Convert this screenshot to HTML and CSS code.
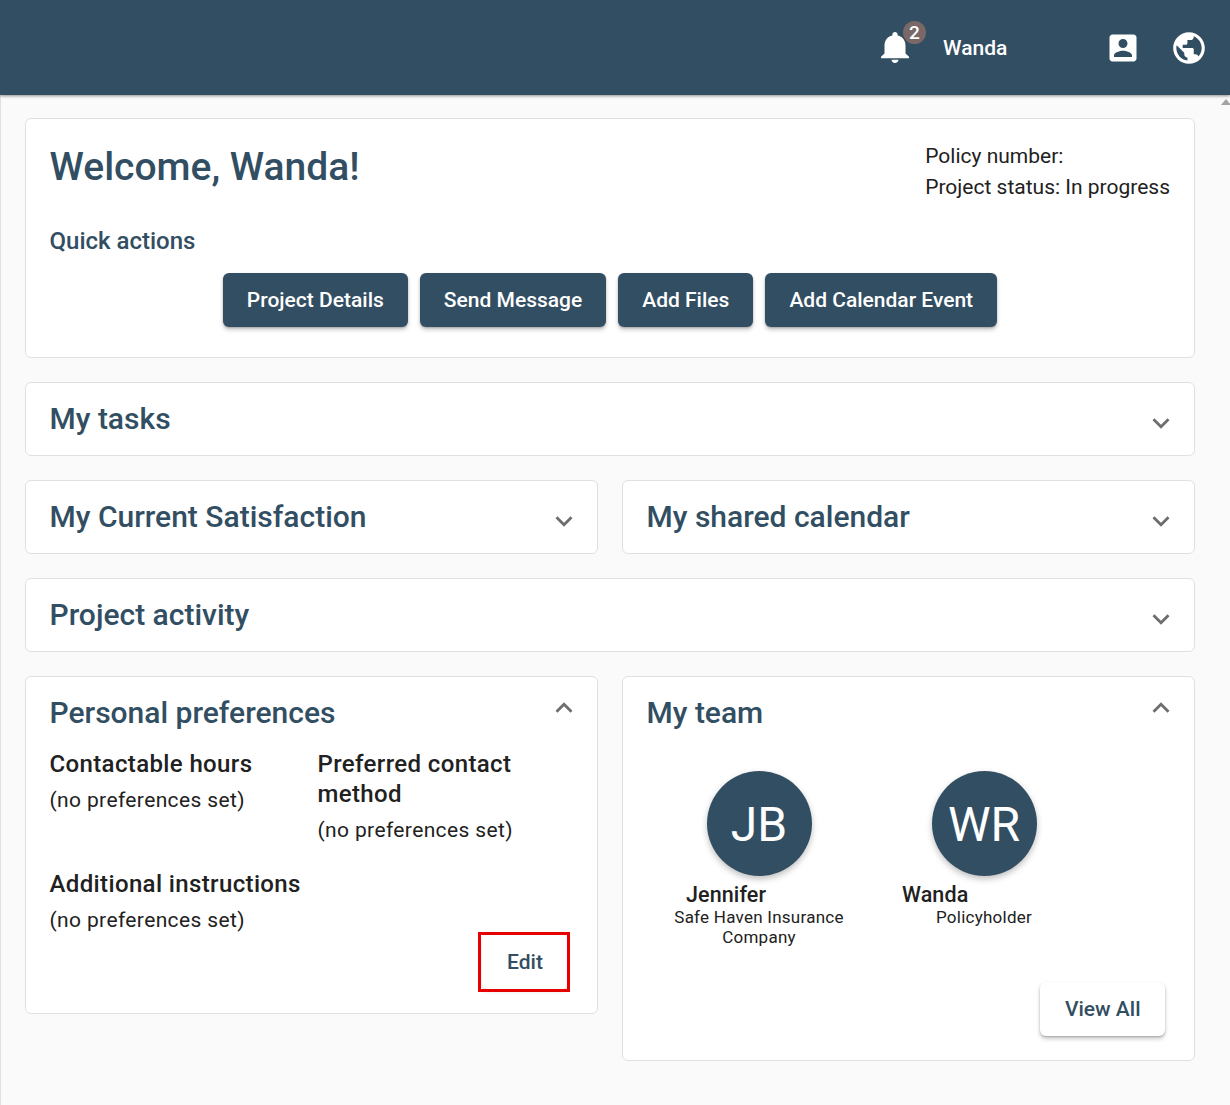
FILE: index.html
```html
<!DOCTYPE html>
<html lang="en">
<head>
<meta charset="utf-8">
<title>Dashboard</title>
<link rel="stylesheet" href="styles.css">
</head>
<body>
<header class="topbar">
  <div class="bell-wrap">
    <svg class="bell" viewBox="4 2.5 16 19.5" width="28" height="31" preserveAspectRatio="none"><path fill="#fff" d="M12 22c1.1 0 2-.9 2-2h-4c0 1.1.89 2 2 2zm6-6v-5c0-3.07-1.64-5.64-4.5-6.32V4c0-.83-.67-1.5-1.5-1.5s-1.5.67-1.5 1.5v.68C7.63 5.36 6 7.92 6 11v5l-2 2v1h16v-1l-2-2z"/></svg>
    <span class="badge">2</span>
  </div>
  <span class="user">Wanda</span>
  <svg class="contact" viewBox="0 0 24 24" width="36" height="36"><path fill="#fff" d="M3 5v14c0 1.1.89 2 2 2h14c1.1 0 2-.9 2-2V5c0-1.1-.9-2-2-2H5c-1.11 0-2 .9-2 2zm12 4c0 1.66-1.34 3-3 3s-3-1.34-3-3 1.34-3 3-3 3 1.34 3 3zm-9 8c0-2 4-3.1 6-3.1s6 1.1 6 3.1v1H6v-1z"/></svg>
  <svg class="globe" viewBox="0 0 24 24" width="38" height="38"><path fill="#fff" d="M12 2C6.48 2 2 6.48 2 12s4.48 10 10 10 10-4.48 10-10S17.52 2 12 2zm-1 17.93c-3.95-.49-7-3.85-7-7.93 0-.62.08-1.21.21-1.79L9 15v1c0 1.1.9 2 2 2v1.93zm6.9-2.54c-.26-.81-1-1.39-1.9-1.39h-1v-3c0-.55-.45-1-1-1H8v-2h2c.55 0 1-.45 1-1V7h2c1.1 0 2-.9 2-2v-.41c2.93 1.19 5 4.06 5 7.41 0 2.08-.8 3.97-2.1 5.39z"/></svg>
</header>
<span class="scroll-arrow"></span>
<main class="content">
  <section class="card welcome">
    <div class="welcome-top">
      <h1>Welcome, Wanda!</h1>
      <div class="policy">
        <div>Policy number:</div>
        <div>Project status: In progress</div>
      </div>
    </div>
    <div class="quick">Quick actions</div>
    <div class="actions">
      <button class="btn primary">Project Details</button>
      <button class="btn primary">Send Message</button>
      <button class="btn primary">Add Files</button>
      <button class="btn primary">Add Calendar Event</button>
    </div>
  </section>

  <section class="card fold">
    <h2>My tasks</h2>
    <svg class="chev" viewBox="0 0 24 24" width="34" height="34"><path d="M7.41 8.59 12 13.17l4.59-4.58L18 10l-6 6-6-6z"/></svg>
  </section>

  <div class="two">
    <section class="card fold">
      <h2>My Current Satisfaction</h2>
      <svg class="chev" viewBox="0 0 24 24" width="34" height="34"><path d="M7.41 8.59 12 13.17l4.59-4.58L18 10l-6 6-6-6z"/></svg>
    </section>
    <section class="card fold">
      <h2>My shared calendar</h2>
      <svg class="chev" viewBox="0 0 24 24" width="34" height="34"><path d="M7.41 8.59 12 13.17l4.59-4.58L18 10l-6 6-6-6z"/></svg>
    </section>
  </div>

  <section class="card fold">
    <h2>Project activity</h2>
    <svg class="chev" viewBox="0 0 24 24" width="34" height="34"><path d="M7.41 8.59 12 13.17l4.59-4.58L18 10l-6 6-6-6z"/></svg>
  </section>

  <div class="two top">
    <section class="card open prefs">
      <div class="open-head">
        <h2>Personal preferences</h2>
        <svg class="chev up" viewBox="0 0 24 24" width="34" height="34"><path d="M7.41 15.41 12 10.83l4.59 4.58L18 14l-6-6-6 6z"/></svg>
      </div>
      <div class="pref-grid">
        <div>
          <h3>Contactable hours</h3>
          <p>(no preferences set)</p>
        </div>
        <div>
          <h3>Preferred contact method</h3>
          <p>(no preferences set)</p>
        </div>
        <div class="pref-wide">
          <h3>Additional instructions</h3>
          <p>(no preferences set)</p>
        </div>
      </div>
      <button class="btn light edit">Edit</button>
      <span class="highlight"></span>
    </section>

    <section class="card open team">
      <div class="open-head">
        <h2>My team</h2>
        <svg class="chev up" viewBox="0 0 24 24" width="34" height="34"><path d="M7.41 15.41 12 10.83l4.59 4.58L18 14l-6-6-6 6z"/></svg>
      </div>
      <div class="members">
        <div class="member">
          <div class="avatar">JB</div>
          <div class="name name-jb">Jennifer</div>
          <div class="role">Safe Haven Insurance Company</div>
        </div>
        <div class="member">
          <div class="avatar">WR</div>
          <div class="name name-wr">Wanda</div>
          <div class="role">Policyholder</div>
        </div>
      </div>
      <div class="view-row">
        <button class="btn light view">View All</button>
      </div>
    </section>
  </div>
</main>
</body>
</html>
```
FILE: styles.css
```css
* { box-sizing: border-box; }
html, body { margin: 0; padding: 0; }
body {
  position: relative;
  height: 1105px;
  overflow: hidden;
  background: #fafafa;
  font-family: Roboto, "Liberation Sans", sans-serif;
  color: #212121;
}
.topbar {
  position: relative;
  height: 95px;
  background: #324e62;
  box-shadow: 0 1px 3px rgba(0,0,0,.45);
  display: flex;
  align-items: center;
  color: #fff;
}
.bell-wrap { position: relative; margin-left: 881px; width: 28px; height: 31px; }
.bell { display: block; }
.badge {
  position: absolute;
  left: 22px;
  top: -11px;
  width: 23px;
  height: 23px;
  border-radius: 50%;
  background: #7a6868;
  color: #fff;
  font-size: 19px;
  font-weight: 500;
  line-height: 23px;
  text-align: center;
}
.user { margin-left: 34px; width: 162px; font-size: 21px; font-weight: 500; }
.contact { flex: none; }
.globe { margin-left: 29px; flex: none; }
.scroll-arrow {
  position: absolute;
  right: -1px;
  top: 99px;
  width: 0;
  height: 0;
  border-left: 5px solid transparent;
  border-right: 5px solid transparent;
  border-bottom: 6px solid #a3a3a3;
}
.content {
  height: 1010px;
  border-left: 1px solid #e0e0e0;
  padding: 23px 35px 0 24px;
  display: flex;
  flex-direction: column;
  gap: 24px;
}
.card {
  background: #fff;
  border: 1px solid #e0e0e0;
  border-radius: 6px;
}
.welcome { height: 240px; padding: 0 24px 0 23.5px; }
.welcome-top { display: flex; justify-content: space-between; }
h1 {
  margin: 25px 0 0;
  font-size: 39px;
  line-height: 46px;
  font-weight: 500;
  color: #324e62;
}
.policy { margin-top: 22px; font-size: 21px; line-height: 31px; color: #212121; }
.quick {
  margin: 23px 0 0;
  font-size: 24px;
  line-height: 30px;
  font-weight: 500;
  color: #324e62;
}
.actions { display: flex; justify-content: center; gap: 12px; margin-top: 17px; padding-left: .5px; }
.btn {
  height: 54px;
  padding: 0 24px;
  border: 0;
  border-radius: 6px;
  font-family: inherit;
  font-size: 21px;
  font-weight: 500;
  box-shadow: 0 3px 4px rgba(0,0,0,.2), 0 1px 2px rgba(0,0,0,.2);
}
.primary { background: #324e62; color: #fff; }
.light { background: #fff; color: #324e62; }
.fold {
  height: 74px;
  padding: 0 24px 0 23.5px;
  display: flex;
  align-items: center;
  justify-content: space-between;
}
.card h2 { margin: 0; font-size: 30px; line-height: 36px; font-weight: 500; color: #324e62; }
.fold h2 { margin-top: -1px; }
.chev { fill: #6e6e6e; margin: 8px -8px 0 0; flex: none; }
.two { display: grid; grid-template-columns: 1fr 1fr; gap: 24px; }
.two.top { align-items: start; }
.open { padding: 18px 24px 0 23.5px; }
.open-head { display: flex; justify-content: space-between; align-items: flex-start; }
.chev.up { margin-top: -4px; margin-right: -8px; }
.prefs { height: 338px; position: relative; }
.team { height: 385px; }
.pref-grid {
  display: grid;
  grid-template-columns: 268px 1fr;
  row-gap: 27px;
  margin-top: 18px;
}
.pref-wide { grid-column: 1 / -1; }
h3 { margin: 0; font-size: 24px; line-height: 30px; font-weight: 500; color: #212121; letter-spacing: .37px; }
.pref-grid p { margin: 9px 0 0; font-size: 21px; line-height: 24px; letter-spacing: .37px; color: #212121; }
.edit {
  position: absolute;
  right: 29px;
  bottom: 24px;
  width: 86px;
  height: 54px;
  padding: 0;
  box-shadow: 0 2px 4px rgba(0,0,0,.15);
}
.highlight {
  position: absolute;
  right: 27px;
  bottom: 21px;
  width: 92px;
  height: 60px;
  border: 3px solid #e60000;
}
.members { display: flex; gap: 55px; margin-top: 40px; margin-left: 27.5px; }
.member { width: 170px; text-align: center; }
.avatar {
  width: 105px;
  height: 105px;
  margin: 0 auto;
  border-radius: 50%;
  background: #324e62;
  color: #fff;
  font-size: 48px;
  line-height: 107px;
  box-shadow: 0 3px 6px rgba(0,0,0,.25);
}
.name { margin-top: 7px; font-size: 21.5px; line-height: 24px; font-weight: 500; text-align: left; letter-spacing: .1px; }
.name-jb { padding-left: 12px; }
.name-wr { padding-left: 3px; }
.role { font-size: 17px; line-height: 20px; letter-spacing: .25px; }
.view-row { display: flex; justify-content: flex-end; margin: 35px 5px 0 0; }
.view { padding: 0 24.5px; }
```
